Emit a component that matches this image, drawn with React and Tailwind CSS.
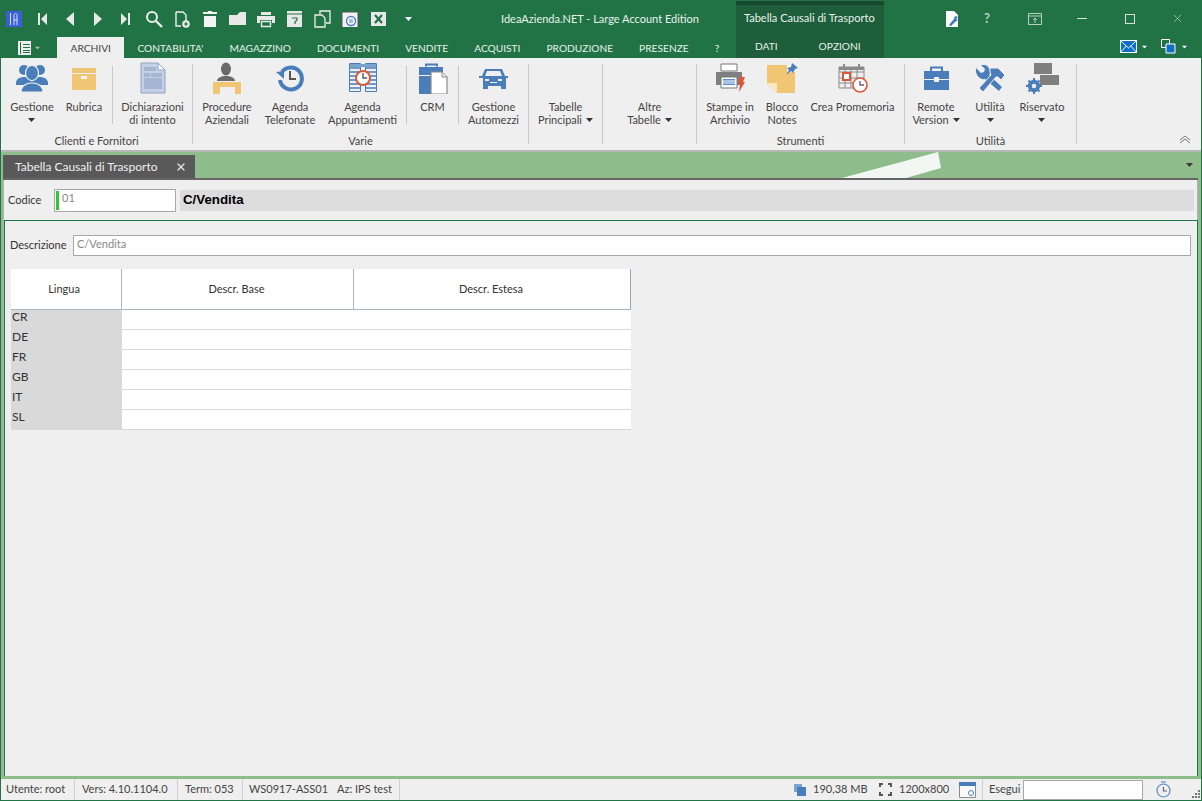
import React from "react";
import { X } from "lucide-react";

const Tri = ({ className = "" }) => (
  <svg width="7" height="4" viewBox="0 0 7 4" className={"inline-block " + className}>
    <path d="M0 0h7L3.5 4z" fill="currentColor" />
  </svg>
);

// toolbar icons (top row)
const tb = {
  first: <path d="M6 4h2v12H6zM15 4v12L9 10z" fill="#e8e8e8" />,
  prev: <path d="M14 3v14L6 10z" fill="#e8e8e8" />,
  next: <path d="M6 3v14l8-7z" fill="#e8e8e8" />,
  last: <path d="M5 4v12l6-6zM12 4h2v12h-2z" fill="#e8e8e8" />,
  search: (
    <g fill="none" stroke="#eeeeee" strokeWidth="2">
      <circle cx="8" cy="8" r="5" />
      <path d="M12 12l6 6" strokeWidth="2.4" />
    </g>
  ),
  add: (
    <g>
      <path d="M4 3h7l3 3v6M9 17H4V3" fill="none" stroke="#eeeeee" strokeWidth="1.4" />
      <circle cx="14" cy="15" r="3.8" fill="#eeeeee" />
      <path d="M12 15h4M14 13v4" stroke="#217346" strokeWidth="1.2" />
    </g>
  ),
  trash: <path d="M8 2h4v1h5v2H3V3h5zM4 7h12v11H4z" fill="#f4f4f4" />,
  folder: <path d="M1 6h8l3-3h6v13H1z" fill="#e8e8e8" />,
  print: (
    <g>
      <path d="M5 3h10v3H5zM1 7h18v7h-3V11H4v3H1z" fill="#e8e8e8" />
      <path d="M5.5 12.5h9v5h-9z" fill="none" stroke="#e8e8e8" strokeWidth="1.4" />
    </g>
  ),
  help: (
    <g>
      <path d="M3 2h15v16H3z" fill="#e8e8e8" />
      <path d="M3 5h15" stroke="#217346" />
      <path d="M8 9h5v2l-2 2v2" fill="none" stroke="#217346" strokeWidth="1.2" />
    </g>
  ),
  copy: (
    <g fill="none" stroke="#eeeeee" strokeWidth="1.3">
      <path d="M8 5V2h6l4 0v12h-4" />
      <path d="M3 6h7l3 3v9H3z" />
    </g>
  ),
  preview: (
    <g>
      <path d="M2 3h16v15H2z" fill="#f2f2f2" />
      <path d="M2 3h16M2 3v15M18 3v15" stroke="#555" strokeWidth="1" fill="none" />
      <circle cx="11" cy="12" r="4.5" fill="#fff" stroke="#4a7ebb" strokeWidth="1.4" />
      <path d="M9 11h4M9 13h4" stroke="#4a7ebb" />
    </g>
  ),
  excel: (
    <g>
      <path d="M3 3h15v14H3z" fill="#e8e8e8" />
      <path d="M7 6l7 8M14 6l-7 8" stroke="#217346" strokeWidth="2.2" />
    </g>
  ),
};

const toolbarKeys = ["first", "prev", "next", "last", "search", "add", "trash", "folder", "print", "help", "copy", "preview", "excel"];

// ribbon icons
const PeopleIcon = () => (
  <svg width="34" height="30" viewBox="0 0 34 30" fill="#4a7ebb">
    <circle cx="9" cy="7" r="5" />
    <circle cx="25" cy="7" r="5" />
    <path d="M1 20c0-4 4-6 8-6s8 2 8 6v2H1zM17 20c0-4 4-6 8-6s8 2 8 6v2H17z" />
    <ellipse cx="17" cy="10" rx="6.5" ry="7.5" stroke="#efefef" strokeWidth="1.2" />
    <path d="M6 29c0-6 5-9 11-9s11 3 11 9z" stroke="#efefef" strokeWidth="1.2" />
  </svg>
);
const BoxIcon = () => (
  <svg width="26" height="24" viewBox="0 0 26 24" className="mt-[2px]">
    <path d="M1 1h24v5H1z" fill="#eec673" />
    <path d="M1 7h24v16H1z" fill="#f0c674" />
    <path d="M10 9h6v3h-6z" fill="#fff" opacity=".85" />
  </svg>
);
const DocIcon = () => (
  <svg width="26" height="32" viewBox="0 0 26 32">
    <path d="M1 1h17l7 7v23H1z" fill="#c4d0e6" stroke="#8ea2c6" />
    <path d="M18 1v7h7z" fill="#fff" stroke="#8ea2c6" />
    <path d="M4 5h12v4H4zM4 11h6v4H4zM11 11h11v4H11zM4 16h18v11H4z" fill="#a6b5d2" />
  </svg>
);
const DeskIcon = () => (
  <svg width="30" height="32" viewBox="0 0 30 32">
    <ellipse cx="14" cy="7" rx="5" ry="6.5" fill="#6a6a6a" />
    <path d="M5 19c0-3 4-5 9-5s9 2 9 5z" fill="#6a6a6a" />
    <path d="M1 20h28v12h-6v-7H8v7H1z" fill="#f0c674" />
  </svg>
);
const HistoryIcon = () => (
  <svg width="28" height="28" viewBox="0 0 28 28" fill="none">
    <path d="M6 8a11 11 0 1 1-2 8" stroke="#4a7ebb" strokeWidth="4" />
    <path d="M0 8l8-1v8z" fill="#4a7ebb" />
    <path d="M14 7v8h6" stroke="#555" strokeWidth="2" />
  </svg>
);
const PlannerIcon = () => (
  <svg width="28" height="30" viewBox="0 0 28 30" fill="none">
    <path d="M.5.5h11v28H.5zM16.5.5h11v28h-11z" stroke="#4a7ebb" />
    <path d="M1 5h10M1 9h10M1 13h10M1 17h10M1 21h10M1 25h10M17 5h10M17 9h10M17 13h10M17 17h10M17 21h10M17 25h10" stroke="#4a7ebb" strokeWidth="1.4" />
    <path d="M1 1h26v3H1z" fill="#7ba3d0" />
    <circle cx="14" cy="15" r="7" fill="#fff" stroke="#d9583b" strokeWidth="2" />
    <path d="M14 10v5h4" stroke="#555" strokeWidth="1.4" />
  </svg>
);
const CrmIcon = () => (
  <svg width="30" height="31" viewBox="0 0 30 31">
    <path d="M8 3.5V1.5h11v2" fill="none" stroke="#4a7ebb" strokeWidth="2" />
    <path d="M1 4h24v8H1zM1 13h14v18H1z" fill="#4a7ebb" />
    <path d="M13 9h11l5 5v17H13z" fill="#fff" stroke="#8a8a8a" strokeWidth="1.2" />
    <path d="M24 9v5h5" fill="#efefef" stroke="#8a8a8a" />
  </svg>
);
const CarIcon = () => (
  <svg width="29" height="21" viewBox="0 0 29 21" fill="#4a7ebb">
    <path d="M6 1h17l3 7h3v2h-2v11h-5v-3H9v3H4V10H0V8h3z" />
    <path d="M8 3h13l2 5H6z" fill="#efefef" />
    <path d="M6 11h4v2H6zM19 11h4v2h-4zM11 14h7v1h-7z" fill="#efefef" />
  </svg>
);
const PrinterIcon = () => (
  <svg width="30" height="30" viewBox="0 0 30 30">
    <path d="M6 1h16v7H6z" fill="#fff" stroke="#777" />
    <path d="M1 9h26v13H1z" fill="#7f7f7f" />
    <path d="M6 14h16v11H6z" fill="#fff" stroke="#777" />
    <path d="M8 16h12v6H8z" fill="#5b8cc8" />
    <path d="M8 18h12M8 20h12" stroke="#fff" />
    <path d="M24 14h6l-2 5h2l-6 10 1-8h-2z" fill="#d9583b" />
  </svg>
);
const NoteIcon = () => (
  <svg width="32" height="31" viewBox="0 0 32 31">
    <path d="M1 2h28v28H11L1 20z" fill="#f0c674" />
    <path d="M1 20h10v10z" fill="#fbe8bc" />
    <path d="M21 2h8v7h-8z" fill="#f6f6f6" />
    <path d="M26 0l6 5-3 1-2 4-2-2-5 4 3-5-2-2 4-1z" fill="#4a7ebb" />
  </svg>
);
const CalendarIcon = () => (
  <svg width="30" height="30" viewBox="0 0 30 30" fill="none">
    <path d="M1 4h25v21H1zM1 9h25M1 15h25M1 20h25M7 4v21M13 4v21M19 4v21" stroke="#8a8a8a" />
    <path d="M1 4h25v3H1zM5 1h2v5H5zM20 1h2v5h-2z" fill="#8a8a8a" />
    <path d="M5 10h7v7H5z" fill="#fff" stroke="#d9583b" strokeWidth="2" />
    <circle cx="22" cy="22" r="7" fill="#fff" stroke="#d9583b" strokeWidth="1.6" />
    <path d="M22 18v4h4" stroke="#666" strokeWidth="1.4" />
  </svg>
);
const CaseIcon = () => (
  <svg width="27" height="24" viewBox="0 0 27 24" fill="#4a7ebb">
    <path d="M8 5V1.5h11V5" fill="none" stroke="#4a7ebb" strokeWidth="2" />
    <path d="M1 5h25v8H16v-2h-5v2H1zM1 14h10v2h5v-2h10v10H1z" />
  </svg>
);
const ToolsIcon = () => (
  <svg width="30" height="27" viewBox="0 0 30 27" fill="#4a7ebb">
    <path d="M1 3l5 5 3-1 1-3-4-4c5-1 9 2 9 7 0 1 0 2-1 3l13 12-3 4L10 14c-5 1-10-4-9-11z" />
    <path d="M4 23L16 10l-1-3 0-4h8l7 7-4 5-3-3-2 0L8 27z" stroke="#efefef" strokeWidth="1" />
  </svg>
);
const ReservedIcon = () => (
  <svg width="33" height="31" viewBox="0 0 33 31">
    <path d="M8 0h18v11H8zM14 12h19v10H14z" fill="#7f7f7f" />
    <path d="M14 11h12v1H14z" fill="#efefef" />
    <circle cx="8" cy="23" r="4.5" fill="none" stroke="#4a7ebb" strokeWidth="3.4" />
    <path d="M8 15v16M0 23h16M2.5 17.5l11 11M13.500 17.500l-11 11" stroke="#4a7ebb" strokeWidth="2" />
    <circle cx="8" cy="23" r="2.2" fill="#efefef" />
  </svg>
);

const Item = ({ icon, lines, w, arrow, arrowBelow }) => (
  <div className={"flex flex-col items-center shrink-0 " + w}>
    <div className="h-[36px] flex items-center justify-center">{icon}</div>
    <div className="mt-[4px] text-center leading-[13px] whitespace-nowrap">
      {lines.map((l, i) => (
        <div key={i}>
          {l}
          {arrow && i === lines.length - 1 && <Tri className="ml-[4px] mb-[2px] text-[#333]" />}
        </div>
      ))}
      {arrowBelow && (
        <div>
          <Tri className="mb-[2px] text-[#333]" />
        </div>
      )}
    </div>
  </div>
);

const ShortSep = () => <div className="w-px h-[58px] mt-[6px] bg-[#c8c8c8] shrink-0" />;

const Group = ({ w, label, children }) => (
  <div className={"flex flex-col shrink-0 h-full " + w}>
    <div className="flex h-[72px]">{children}</div>
    <div className="mt-[2px] text-center leading-[14px] text-[#444]">{label}</div>
  </div>
);

const GroupSep = () => <div className="w-px h-[80px] mt-[4px] bg-[#c8c8c8] shrink-0" />;

const rows = ["CR", "DE", "FR", "GB", "IT", "SL"];
const menuTabs = ["CONTABILITA'", "MAGAZZINO", "DOCUMENTI", "VENDITE", "ACQUISTI", "PRODUZIONE", "PRESENZE", "?"];

export default function App() {
  return (
    <div className="w-[1202px] h-[801px] flex flex-col overflow-hidden bg-[#217346] text-[11px] text-[#444]" style={{ fontFamily: 'Lato, "Open Sans", sans-serif' }}>
      {/* header */}
      <div className="flex h-[58px] shrink-0 text-white">
        <div className="w-[736px] shrink-0 flex flex-col">
          <div className="h-[37px] flex items-center">
            <div className="ml-[6px] w-[16px] h-[16px] bg-[#3a5fd9] flex items-center justify-center">
              <svg width="10" height="12" viewBox="0 0 10 12" fill="none" stroke="#d8e2ff" strokeWidth="1">
                <path d="M1.500 0v12M5 12V2.500c0-1.500 1-2 1.500-2s1.500.5 1.500 2V12M5 7h3" />
              </svg>
            </div>
            <div className="ml-[6px] flex">
              {toolbarKeys.map((k) => (
                <div key={k} className="w-[28px] flex justify-center">
                  <svg width="20" height="20" viewBox="0 0 20 20">
                    {tb[k]}
                  </svg>
                </div>
              ))}
            </div>
            <Tri className="ml-[13px] text-white" />
            <div className="ml-[89px] mt-[2px] whitespace-nowrap text-[#e8f2ec]">IdeaAzienda.NET - Large Account Edition</div>
          </div>
          <div className="h-[21px] flex items-stretch text-[10.200px] text-[#e6f2ea]">
            <div className="w-[57px] shrink-0 flex items-center justify-center gap-[3px] pl-[1px]">
              <svg width="13" height="14" viewBox="0 0 13 14" fill="#eeeeee">
                <path d="M0 0h13v14H0z" />
                <path d="M2 1h1v12H2zM5 3h7v1H5zM5 6h7v1H5zM5 9h7v1H5zM5 11h7v1H5z" fill="#217346" />
              </svg>
              <Tri className="text-[#bbbbbb] scale-75" />
            </div>
            <div className="px-[13.500px] pt-[3px] flex items-center bg-[#efefef] text-[#444]">ARCHIVI</div>
            {menuTabs.map((t) => (
              <div key={t} className="px-[13px] pt-[3px] flex items-center whitespace-nowrap">
                {t}
              </div>
            ))}
          </div>
        </div>

        <div className="w-[148px] shrink-0 flex flex-col bg-[#1e5e3b] border-t-[4px] border-t-[#174a2e] mt-px">
          <div className="h-[27px] flex items-center pl-[8px] whitespace-nowrap text-[#e8f2ec]">Tabella Causali di Trasporto</div>
          <div className="flex-1 flex items-center pt-[3px] text-[10.200px] text-[#e6f2ea]">
            <div className="ml-[19px]">DATI</div>
            <div className="ml-[41px]">OPZIONI</div>
          </div>
        </div>

        <div className="flex-1 flex flex-col">
          <div className="h-[37px] flex items-center">
            <svg width="14" height="18" viewBox="0 0 14 18" className="ml-[61px]">
              <path d="M1 1h8l4 4v12H1z" fill="#fff" />
              <path d="M4 15l5-6 1-3 3 1-2 2 2 1-3 2-4 4z" fill="#3f76c0" />
            </svg>
            <div className="w-[14px] ml-[21px] text-center text-[13px] font-bold text-[#b9cfc2]">?</div>
            <svg width="14" height="12" viewBox="0 0 14 12" fill="none" stroke="#b9cfc2" className="ml-[34px]">
              <path d="M.5.5h13v11H.5zM.5 3h13M7 10V5M5 7l2-2 2 2" />
            </svg>
            <div className="ml-[35px] w-[10px] h-px bg-[#d5e3da]" />
            <div className="ml-[38px] w-[10px] h-[10px] border border-[#d5e3da]" />
            <X size={13} strokeWidth={1} className="ml-[36px] text-[#e8f0eb]" />
          </div>
          <div className="flex-1 flex items-center justify-end pb-[2px] pr-[14px]">
            <svg width="17" height="13" viewBox="0 0 19 13" preserveAspectRatio="none">
              <path d="M0 0h19v13H0z" fill="#fff" />
              <path d="M1 1h17v11H1z" fill="#0f6fc6" />
              <path d="M1 1l8.500 7L18 1M1 12l6-6M18 12l-6-6" stroke="#fff" fill="none" />
            </svg>
            <Tri className="ml-[4px] text-white scale-75" />
            <svg width="15" height="15" viewBox="0 0 15 15" className="ml-[13px]">
              <path d="M.5.5h8v8h-8z" fill="none" stroke="#fff" />
              <path d="M5 5h9v9H5z" fill="#0f6fc6" stroke="#fff" />
            </svg>
            <Tri className="ml-[5px] text-white scale-75" />
          </div>
        </div>
      </div>

      {/* ribbon */}
      <div className="mx-px h-[92px] shrink-0 flex bg-[#efefef] relative pt-[2px]">
        <Group w="w-[191px]" label="Clienti e Fornitori">
          <div className="w-[3px]" />
          <Item w="w-[56px]" icon={<PeopleIcon />} lines={["Gestione"]} arrowBelow />
          <Item w="w-[48px]" icon={<BoxIcon />} lines={["Rubrica"]} />
          <div className="w-[4px]" />
          <ShortSep />
          <Item w="w-[79px]" icon={<DocIcon />} lines={["Dichiarazioni", "di intento"]} />
        </Group>
        <GroupSep />
        <Group w="w-[335px]" label="Varie">
          <Item w="w-[68px]" icon={<DeskIcon />} lines={["Procedure", "Aziendali"]} />
          <Item w="w-[58px]" icon={<HistoryIcon />} lines={["Agenda", "Telefonate"]} />
          <Item w="w-[87px]" icon={<PlannerIcon />} lines={["Agenda", "Appuntamenti"]} />
          <ShortSep />
          <Item w="w-[51px]" icon={<CrmIcon />} lines={["CRM"]} />
          <ShortSep />
          <Item w="w-[69px]" icon={<CarIcon />} lines={["Gestione", "Automezzi"]} />
        </Group>
        <GroupSep />
        <Group w="w-[73px]" label="">
          <Item w="w-[73px]" icon={null} lines={["Tabelle", "Principali"]} arrow />
        </Group>
        <GroupSep />
        <Group w="w-[93px]" label="">
          <Item w="w-[93px]" icon={null} lines={["Altre", "Tabelle"]} arrow />
        </Group>
        <GroupSep />
        <Group w="w-[207px]" label="Strumenti">
          <Item w="w-[66px]" icon={<PrinterIcon />} lines={["Stampe in", "Archivio"]} />
          <Item w="w-[38px]" icon={<NoteIcon />} lines={["Blocco", "Notes"]} />
          <Item w="w-[103px]" icon={<CalendarIcon />} lines={["Crea Promemoria"]} />
        </Group>
        <GroupSep />
        <Group w="w-[171px]" label="Utilità">
          <Item w="w-[62px]" icon={<CaseIcon />} lines={["Remote", "Version"]} arrow />
          <Item w="w-[46px]" icon={<ToolsIcon />} lines={["Utilità"]} arrowBelow />
          <Item w="w-[58px]" icon={<ReservedIcon />} lines={["Riservato"]} arrowBelow />
        </Group>
        <GroupSep />
        <div className="flex-1 flex items-end justify-end pr-[10px] pb-[6px]">
          <svg width="12" height="9" viewBox="0 0 12 9" fill="none" stroke="#777">
            <path d="M1 5l5-4 5 4M1 8l5-4 5 4" />
          </svg>
        </div>
      </div>
      <div className="mx-px h-[2px] bg-[#b5b8b5] shrink-0" />

      {/* doc tab strip */}
      <div className="mx-px h-[26px] shrink-0 bg-[#8fbc8b] flex items-end relative">
        <div className="ml-[2px] w-[192px] h-[23px] bg-[#595959] flex items-center justify-between pl-[12px] pr-[8px] text-[12px] text-[#f0f0f0] whitespace-nowrap">
          <span>Tabella Causali di Trasporto</span>
          <X size={12} strokeWidth={2.5} className="text-[#e6e6e6]" />
        </div>
        <svg width="100" height="26" viewBox="0 0 100 26" className="absolute left-[841px] top-0">
          <path d="M0 26L96 0l3 16-35 10z" fill="#f3f7f3" />
        </svg>
        <Tri className="absolute right-[8px] top-[11px] text-[#3a3a3a]" />
      </div>

      {/* document area */}
      <div className="mx-px flex-1 min-h-0 flex flex-col bg-[#8fbc8b] pl-[2px] pr-[3px]">
        <div className="h-[2px] bg-[#666] shrink-0" />
        <div className="flex-1 min-h-0 flex flex-col bg-[#efefef] border-l border-l-[#b0b0b0]">
          <div className="h-[40px] shrink-0 flex items-center border-r-[1px] border-r-[#b0b0b0] text-[#333]">
            <span className="ml-[4px] w-[46px]">Codice</span>
            <div className="w-[122px] h-[23px] bg-white border border-[#a8a8a8] flex pl-[1px] py-[1px]">
              <div className="w-[3px] bg-[#2fc936]" />
              <span className="ml-[3px] -mt-[1px] text-[#888]">01</span>
            </div>
            <div className="ml-[4px] flex-1 mr-[3px] h-[21px] bg-[#dcdcdc] flex items-center pl-[3px] text-[13.300px] font-bold text-black" style={{ fontFamily: '"Liberation Sans", sans-serif' }}>
              C/Vendita
            </div>
          </div>

          <div className="flex-1 min-h-0 border border-[#217346] border-b-0 pl-[5px] pr-[6px]">
            <div className="pt-[14px] flex items-center text-[#333]">
              <span className="w-[63px]">Descrizione</span>
              <div className="flex-1 h-[21px] bg-white border border-[#a8a8a8] pl-[3px] leading-[16px] text-[#888]">C/Vendita</div>
            </div>

            <div className="mt-[13px] ml-px w-[620px] text-[#333]">
              <div className="h-[41px] flex bg-white border-b border-b-[#a9b8c6] border-r border-r-[#8fa8c0]">
                <div className="w-[111px] pr-[4px] flex items-center justify-center border-r border-r-[#a9b8c6]">Lingua</div>
                <div className="w-[232px] pr-[2px] flex items-center justify-center border-r border-r-[#a9b8c6]">Descr. Base</div>
                <div className="flex-1 pr-[2px] flex items-center justify-center">Descr. Estesa</div>
              </div>
              {rows.map((r) => (
                <div key={r} className="h-[20px] flex bg-white border-b border-b-[#d8d8d8]">
                  <div className="w-[111px] bg-[#d9d9d9] pl-[1px] leading-[13px] text-[12px]">{r}</div>
                  <div className="flex-1" />
                </div>
              ))}
            </div>
          </div>
        </div>
      </div>

      {/* status bar */}
      <div className="h-[3px] mx-px bg-[#8fbc8b] shrink-0" />
      <div className="mx-px h-[21px] shrink-0 flex items-center bg-[#efefef] text-[#444] whitespace-nowrap">
        <span className="ml-[5px] w-[68px]">Utente: root</span>
        <div className="w-px h-full bg-[#d0d0d0]" />
        <span className="ml-[7px] w-[95px]">Vers: 4.10.1104.0</span>
        <div className="w-px h-full bg-[#d0d0d0]" />
        <span className="ml-[7px] w-[57px]">Term: 053</span>
        <div className="w-px h-full bg-[#d0d0d0]" />
        <span className="ml-[6px] w-[88px]">WS0917-ASS01</span>
        <span className="w-[62px]">Az: IPS test</span>
        <div className="w-px h-full bg-[#d0d0d0]" />
        <svg width="12" height="12" viewBox="0 0 12 12" className="ml-[394px]">
          <path d="M0 0h8v8H0z" fill="#7fa3d0" />
          <path d="M3 3h9v9H3z" fill="#4a7ebb" />
        </svg>
        <span className="ml-[7px] w-[66px]">190,38 MB</span>
        <svg width="13" height="13" viewBox="0 0 13 13" fill="none" stroke="#555" strokeWidth="2">
          <path d="M1 4V1h3M9 1h3v3M12 9v3H9M4 12H1V9" />
        </svg>
        <span className="ml-[7px] w-[60px]">1200x800</span>
        <svg width="17" height="16" viewBox="0 0 17 16">
          <path d="M.5.5h16v15H.500z" fill="#f8f8f8" stroke="#8a8a8a" />
          <path d="M0 0h17v4H0z" fill="#4a7ebb" />
          <circle cx="12" cy="11" r="2.500" fill="#fff" stroke="#4a7ebb" />
        </svg>
        <div className="ml-[6px] w-px h-full bg-[#d0d0d0]" />
        <span className="ml-[6px] w-[34px]">Esegui</span>
        <div className="w-[120px] h-[20px] bg-white border border-[#a8a8a8]" />
        <svg width="15" height="17" viewBox="0 0 15 17" fill="none" stroke="#5b8cc8" strokeWidth="1.2" className="ml-[13px]">
          <circle cx="7.500" cy="9.500" r="6.500" />
          <path d="M5 1h5" />
          <path d="M7.500 6v4h3.500" stroke="#666" />
        </svg>
        <svg width="9" height="9" viewBox="0 0 9 9" fill="#777" className="ml-[21px] mt-[9px]">
          <path d="M6 0h2v2H6zM3 3h2v2H3zM6 3h2v2H6zM0 6h2v2H0zM3 6h2v2H3zM6 6h2v2H6z" />
        </svg>
      </div>
      <div className="h-px shrink-0" />
    </div>
  );
}
